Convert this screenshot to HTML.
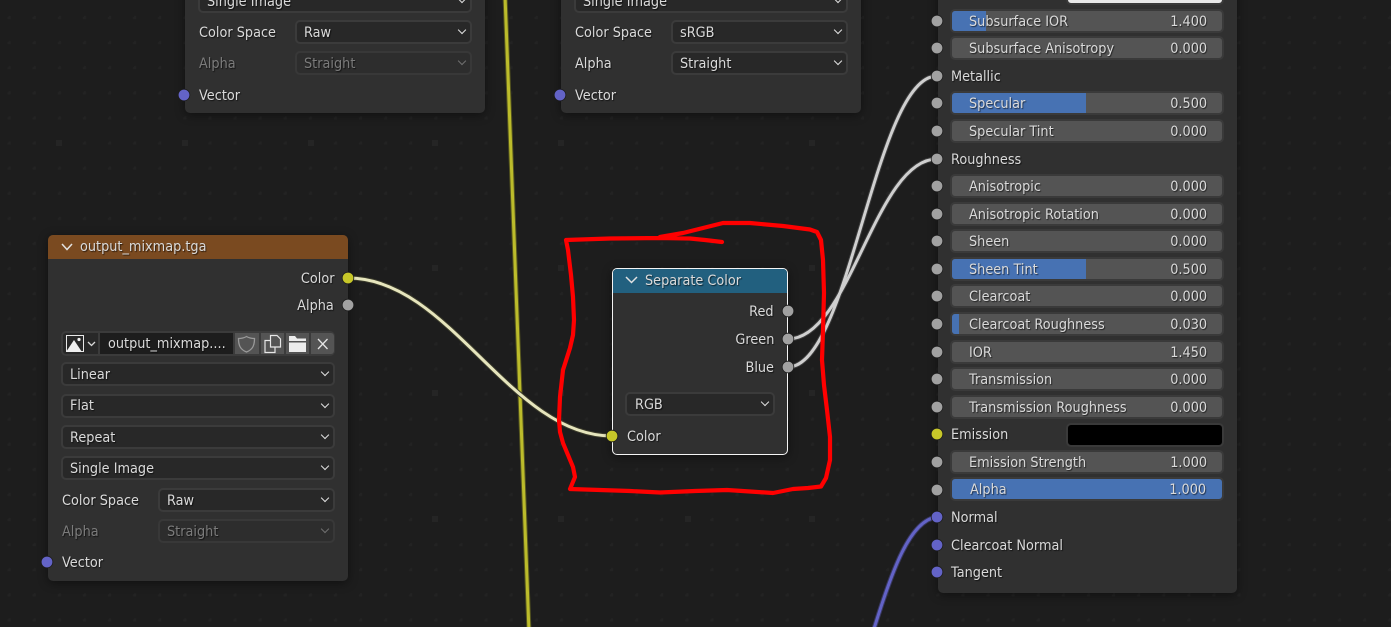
<!DOCTYPE html>
<html><head><meta charset="utf-8"><style>
html,body{margin:0;padding:0;background:#1d1d1d}
#r{position:relative;width:1391px;height:627px;overflow:hidden;background:#1d1d1d;font-family:"DejaVu Sans","Liberation Sans",sans-serif;font-size:14px;color:#dadada}
svg.l{position:absolute;left:0;top:0}
.n{position:absolute;background:#303030;border-radius:5px;box-shadow:0 2px 10px rgba(0,0,0,.45)}
.h{position:absolute;left:0;right:0;top:0;border-radius:5px 5px 0 0}
.t{position:absolute;height:20px;line-height:20px;margin-top:2px;white-space:nowrap;text-shadow:1px 1px 1px rgba(0,0,0,.6);transform:scaleX(.92);transform-origin:0 50%}
.ra{text-align:right;transform-origin:100% 50%}
.dim{color:#7b7b7b}
.d{position:absolute;box-sizing:border-box;height:24px;border:2px solid #3b3b3b;border-radius:5px;background:#282828}
.d:after{content:"";position:absolute;right:5px;top:5px;width:5px;height:5px;border-right:1.5px solid #e0e0e0;border-bottom:1.5px solid #e0e0e0;transform:rotate(45deg)}
.d.x{background:#2d2d2d;border-color:#383838}
.d.x:after{border-color:#707070}
.s{position:absolute;box-sizing:border-box;left:950px;width:274px;height:24px;border:2px solid #3a3a3a;border-radius:5px;background:#545454;overflow:hidden}
.s i{display:block;height:100%;background:#4772b3}
.c{position:absolute;left:1066px;width:158px;box-sizing:border-box;border:2px solid #3a3a3a;border-radius:5px}
.b{position:absolute;top:333px;height:21px;background:#545454}
</style></head><body><div id="r">
<svg class="l" width="1391" height="627" viewBox="0 0 1391 627">
<defs>
<pattern id="g1" x="360" y="268" width="25.1" height="25.1" patternUnits="userSpaceOnUse"><rect x="-1" y="-1" width="3" height="3" fill="#232323"/><rect x="24.1" y="-1" width="1" height="3" fill="#232323"/><rect x="-1" y="24.1" width="3" height="1" fill="#232323"/></pattern>
</defs>
<rect width="1391" height="627" fill="#1d1d1d"/>
<rect x="0" y="0" width="1391" height="627" fill="url(#g1)"/>
<g fill="#252525">
<rect x="432" y="265" width="6" height="6"/><rect x="558" y="265" width="6" height="6"/><rect x="809" y="265" width="6" height="6"/><rect x="432" y="390" width="6" height="6"/><rect x="558" y="390" width="6" height="6"/><rect x="809" y="390" width="6" height="6"/><rect x="809" y="140" width="6" height="6"/><rect x="558" y="140" width="6" height="6"/><rect x="432" y="140" width="6" height="6"/><rect x="432" y="516" width="6" height="6"/><rect x="558" y="516" width="6" height="6"/><rect x="809" y="516" width="6" height="6"/><rect x="685" y="516" width="6" height="6"/><rect x="308" y="140" width="6" height="6"/><rect x="182" y="140" width="6" height="6"/><rect x="56" y="140" width="6" height="6"/>
</g>
<g fill="none" stroke-linecap="round">
<path d="M505,-5C512,200 522,430 529,632" stroke="#55551f" stroke-width="5"/>
<path d="M505,-5C512,200 522,430 529,632" stroke="#bcbc2b" stroke-width="3"/>
<path d="M348,278C450,278 510,436 612,436" stroke="#3a3a2a" stroke-width="5"/>
<path d="M348,278C450,278 510,436 612,436" stroke="#e6e5bd" stroke-width="3"/>
<path d="M788,339C850,339 875,159 937,159" stroke="#3c3c3c" stroke-width="5"/>
<path d="M788,367C850,367 875,76 937,76" stroke="#3c3c3c" stroke-width="5"/>
<path d="M788,339C850,339 875,159 937,159" stroke="#cfcfcf" stroke-width="3"/>
<path d="M788,367C850,367 875,76 937,76" stroke="#cfcfcf" stroke-width="3"/>
<path d="M937,517C910,520 892,570 873,632" stroke="#38385f" stroke-width="5"/>
<path d="M937,517C910,520 892,570 873,632" stroke="#6363c7" stroke-width="3"/>
</g>
</svg>

<!-- top-left node -->
<div class="n" style="left:185px;top:-60px;width:300px;height:173px"></div>
<div class="d" style="left:198px;top:-11px;width:274px"></div>
<div class="t" style="left:207px;top:-10px">Single Image</div>
<div class="t" style="left:199px;top:21px">Color Space</div>
<div class="d" style="left:295px;top:20px;width:177px"></div>
<div class="t" style="left:304px;top:21px">Raw</div>
<div class="t dim" style="left:199px;top:52px">Alpha</div>
<div class="d x" style="left:295px;top:51px;width:177px"></div>
<div class="t dim" style="left:304px;top:52px">Straight</div>
<div class="t" style="left:199px;top:84px">Vector</div>

<!-- top-middle node -->
<div class="n" style="left:561px;top:-60px;width:300px;height:173px"></div>
<div class="d" style="left:574px;top:-11px;width:274px"></div>
<div class="t" style="left:583px;top:-10px">Single Image</div>
<div class="t" style="left:575px;top:21px">Color Space</div>
<div class="d" style="left:671px;top:20px;width:177px"></div>
<div class="t" style="left:680px;top:21px">sRGB</div>
<div class="t" style="left:575px;top:52px">Alpha</div>
<div class="d" style="left:671px;top:51px;width:177px"></div>
<div class="t" style="left:680px;top:52px">Straight</div>
<div class="t" style="left:575px;top:84px">Vector</div>

<!-- image node -->
<div class="n" style="left:48px;top:235px;width:300px;height:346px"><div class="h" style="height:24px;background:#7a4a20"></div></div>
<div class="t" style="left:80px;top:235px">output_mixmap.tga</div>
<div class="t ra" style="right:1056px;top:267px">Color</div>
<div class="t ra" style="right:1057px;top:294px">Alpha</div>
<div style="position:absolute;left:61px;top:331px;width:274px;height:25px;background:#3b3b3b;border-radius:5px"></div>
<div style="position:absolute;left:63px;top:333px;width:35px;height:21px;background:#282828;border-radius:3px 0 0 3px"></div>
<div style="position:absolute;left:100px;top:333px;width:133px;height:21px;background:#1d1d1d"></div>
<div class="t" style="left:108px;top:332px">output_mixmap....</div>
<div class="b" style="left:235px;width:24px"></div>
<div class="b" style="left:261px;width:23px"></div>
<div class="b" style="left:286px;width:23px"></div>
<div class="b" style="left:311px;width:23px;border-radius:0 3px 3px 0"></div>
<div class="d" style="left:61px;top:362px;width:274px"></div>
<div class="t" style="left:70px;top:363px">Linear</div>
<div class="d" style="left:61px;top:394px;width:274px"></div>
<div class="t" style="left:70px;top:394px">Flat</div>
<div class="d" style="left:61px;top:425px;width:274px"></div>
<div class="t" style="left:70px;top:426px">Repeat</div>
<div class="d" style="left:61px;top:456px;width:274px"></div>
<div class="t" style="left:70px;top:457px">Single Image</div>
<div class="t" style="left:62px;top:489px">Color Space</div>
<div class="d" style="left:158px;top:488px;width:177px"></div>
<div class="t" style="left:167px;top:489px">Raw</div>
<div class="t dim" style="left:62px;top:520px">Alpha</div>
<div class="d x" style="left:158px;top:519px;width:177px"></div>
<div class="t dim" style="left:167px;top:520px">Straight</div>
<div class="t" style="left:62px;top:551px">Vector</div>

<!-- separate color -->
<div class="n" style="left:612px;top:268px;width:176px;height:187px;box-sizing:border-box;border:1.5px solid #f4f4f4"><div class="h" style="height:24px;background:#22607f;border-radius:4px 4px 0 0"></div></div>
<div class="t" style="left:645px;top:269px">Separate Color</div>
<div class="t ra" style="right:617px;top:300px">Red</div>
<div class="t ra" style="right:617px;top:328px">Green</div>
<div class="t ra" style="right:617px;top:356px">Blue</div>
<div class="d" style="left:625px;top:392px;width:150px"></div>
<div class="t" style="left:635px;top:393px">RGB</div>
<div class="t" style="left:627px;top:425px">Color</div>

<!-- principled -->
<div class="n" style="left:938px;top:-60px;width:299px;height:653px"></div>
<div class="t" style="left:951px;top:-18px">Subsurface Color</div>
<div class="c" style="top:-20px;height:25px;background:#e8e8e8"></div>
<div class="s" style="top:9px"><i style="width:34px"></i></div><div class="t" style="left:969px;top:10px">Subsurface IOR</div><div class="t ra" style="right:184px;top:10px">1.400</div>
<div class="s" style="top:36px"></div><div class="t" style="left:969px;top:37px">Subsurface Anisotropy</div><div class="t ra" style="right:184px;top:37px">0.000</div>
<div class="t" style="left:951px;top:65px">Metallic</div>
<div class="s" style="top:91px"><i style="width:134px"></i></div><div class="t" style="left:969px;top:92px">Specular</div><div class="t ra" style="right:184px;top:92px">0.500</div>
<div class="s" style="top:119px"></div><div class="t" style="left:969px;top:120px">Specular Tint</div><div class="t ra" style="right:184px;top:120px">0.000</div>
<div class="t" style="left:951px;top:148px">Roughness</div>
<div class="s" style="top:174px"></div><div class="t" style="left:969px;top:175px">Anisotropic</div><div class="t ra" style="right:184px;top:175px">0.000</div>
<div class="s" style="top:202px"></div><div class="t" style="left:969px;top:203px">Anisotropic Rotation</div><div class="t ra" style="right:184px;top:203px">0.000</div>
<div class="s" style="top:229px"></div><div class="t" style="left:969px;top:230px">Sheen</div><div class="t ra" style="right:184px;top:230px">0.000</div>
<div class="s" style="top:257px"><i style="width:134px"></i></div><div class="t" style="left:969px;top:258px">Sheen Tint</div><div class="t ra" style="right:184px;top:258px">0.500</div>
<div class="s" style="top:284px"></div><div class="t" style="left:969px;top:285px">Clearcoat</div><div class="t ra" style="right:184px;top:285px">0.000</div>
<div class="s" style="top:312px"><i style="width:7px"></i></div><div class="t" style="left:969px;top:313px">Clearcoat Roughness</div><div class="t ra" style="right:184px;top:313px">0.030</div>
<div class="s" style="top:340px"></div><div class="t" style="left:969px;top:341px">IOR</div><div class="t ra" style="right:184px;top:341px">1.450</div>
<div class="s" style="top:367px"></div><div class="t" style="left:969px;top:368px">Transmission</div><div class="t ra" style="right:184px;top:368px">0.000</div>
<div class="s" style="top:395px"></div><div class="t" style="left:969px;top:396px">Transmission Roughness</div><div class="t ra" style="right:184px;top:396px">0.000</div>
<div class="t" style="left:951px;top:423px">Emission</div>
<div class="c" style="top:423px;height:24px;background:#000"></div>
<div class="s" style="top:450px"></div><div class="t" style="left:969px;top:451px">Emission Strength</div><div class="t ra" style="right:184px;top:451px">1.000</div>
<div class="s" style="top:477px;background:#4772b3"></div><div class="t" style="left:970px;top:478px">Alpha</div><div class="t ra" style="right:185px;top:478px">1.000</div>
<div class="t" style="left:951px;top:506px">Normal</div>
<div class="t" style="left:951px;top:534px">Clearcoat Normal</div>
<div class="t" style="left:951px;top:561px">Tangent</div>

<svg class="l" width="1391" height="627" viewBox="0 0 1391 627">
<!-- header chevrons -->
<g fill="none" stroke="#e2e2e2" stroke-width="1.5">
<path d="M62,244L67,249.5L72,244"/>
<path d="M626,277L631.5,282.5L637,277"/>
</g>
<!-- image button icons -->
<g fill="none">
<rect x="66.500" y="335.500" width="17" height="16" stroke="#e8e8e8" stroke-width="1"/>
<path d="M66,352L74,340L82,352Z" fill="#efefef"/>
<circle cx="79" cy="339.500" r="1.600" fill="#efefef"/>
<path d="M88,342L91.500,345.500L95,342" stroke="#d8d8d8" stroke-width="1.300"/>
<path d="M246.500,336.500C244,338 241,338.500 238.500,338.500C238.500,345 240,349.500 246.500,352C253,349.500 254.500,345 254.500,338.500C252,338.500 249,338 246.500,336.500Z" stroke="#9a9a9a" stroke-width="1.300"/>
<path d="M270,340.500H265V352.500H275V347" stroke="#e6e6e6" stroke-width="1.200"/>
<path d="M270.500,335.500H277L280.500,339V347H270.500Z" stroke="#e6e6e6" stroke-width="1.200"/>
<path d="M289,336H295L297,338.500H306V341H289Z" fill="#ececec"/>
<path d="M289,342.500H306V352H289Z" fill="#ececec"/>
<path d="M318,339L327.500,349M327.500,339L318,349" stroke="#e4e4e4" stroke-width="1.300"/>
</g>
<!-- sockets -->
<g stroke="#1c1c1c" stroke-width=".8">
<g fill="#c7c729">
<circle cx="348" cy="278" r="5.800"/><circle cx="612" cy="436" r="5.800"/><circle cx="937" cy="434" r="5.800"/>
</g>
<g fill="#a1a1a1">
<circle cx="348" cy="305" r="5.800"/><circle cx="788" cy="311" r="5.800"/><circle cx="788" cy="339" r="5.800"/><circle cx="788" cy="367" r="5.800"/>
<circle cx="937" cy="21" r="5.800"/><circle cx="937" cy="48" r="5.800"/><circle cx="937" cy="76" r="5.800"/><circle cx="937" cy="103" r="5.800"/><circle cx="937" cy="131" r="5.800"/><circle cx="937" cy="159" r="5.800"/><circle cx="937" cy="186" r="5.800"/><circle cx="937" cy="214" r="5.800"/><circle cx="937" cy="241" r="5.800"/><circle cx="937" cy="269" r="5.800"/><circle cx="937" cy="296" r="5.800"/><circle cx="937" cy="324" r="5.800"/><circle cx="937" cy="352" r="5.800"/><circle cx="937" cy="379" r="5.800"/><circle cx="937" cy="407" r="5.800"/><circle cx="937" cy="462" r="5.800"/><circle cx="937" cy="490" r="5.800"/>
</g>
<g fill="#6363c7">
<circle cx="47" cy="562" r="5.800"/><circle cx="184" cy="95" r="5.800"/><circle cx="560" cy="95" r="5.800"/><circle cx="937" cy="517" r="5.800"/><circle cx="937" cy="545" r="5.800"/><circle cx="937" cy="572" r="5.800"/>
</g>
</g>
<!-- red annotation -->
<path fill="none" stroke="#ff0000" stroke-width="4.200" stroke-linejoin="round" stroke-linecap="round" d="M722,242L705,240L690,238.500L660,238L610,238.500L566,240L568,250L571,275L573,297L574,320L573,335L570,348L563,370L560,397L559,420L560,432L563,443L568,455L573,467L575,477L570,489L600,490L630,491L660,492.500L695,491L727,490L750,491.500L773,493L783,491L793,489L808,488L821,486.500L826,478L830,460L830,437L827,410L824,385L822,360L823,330L824,293L823,260L821,240L817,232L810,229.500L783,226L750,223L723,223L707,227L683,233L660,237"/>
</svg>
</div></body></html>
